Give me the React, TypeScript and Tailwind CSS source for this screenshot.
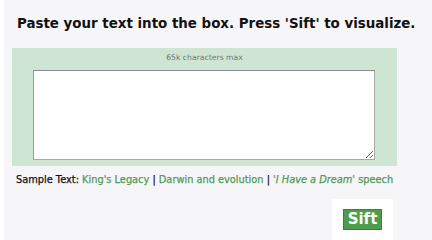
import React from "react";

export default function App() {
  return (
    <div
      className="w-[432px] h-[240px] bg-[#f6f6f8] border-l-[4px] border-white overflow-hidden"
      style={{ fontFamily: '"DejaVu Sans", Verdana, sans-serif' }}
    >
      <h1 className="pl-[13px] pt-[16px] text-[13.4px] leading-[16px] font-bold text-[#111] whitespace-nowrap">
        Paste your text into the box. Press 'Sift' to visualize.
      </h1>
      <div className="ml-[8px] mt-[16px] w-[385px] h-[118px] bg-[#cfe5d3] pt-[5px]">
        <div className="text-center text-[7.7px] leading-[10px] text-[#6f756f]">65k characters max</div>
        <textarea className="block ml-[21px] mt-[7px] w-[342px] h-[90px] bg-white border border-[#a8aaa8] border-t-[#8c8c8c] border-l-[#9a9a9a] outline-none resize" />
      </div>
      <div className="pl-[12px] mt-[8px] text-[9.8px] leading-[12px] whitespace-nowrap text-[#52985a] [-webkit-text-stroke:0.25px_currentColor]">
        <span className="text-[#111]">Sample Text: </span>
        <span>King's Legacy</span>
        <span className="text-[#111]"> | </span>
        <span>Darwin and evolution</span>
        <span className="text-[#111]"> | </span>
        <span>'<i>I Have a Dream</i>' speech</span>
      </div>
      <div className="flex mt-[13px] pl-[328px]">
        <div className="w-[61px] h-[43px] bg-white flex pt-[10px] pl-[11px]">
          <div className="w-[39px] h-[21px] bg-[#4c9d4c] border border-[#3d7e3d] text-white font-bold text-[15px] leading-[19px] text-center">
            Sift
          </div>
        </div>
      </div>
    </div>
  );
}
